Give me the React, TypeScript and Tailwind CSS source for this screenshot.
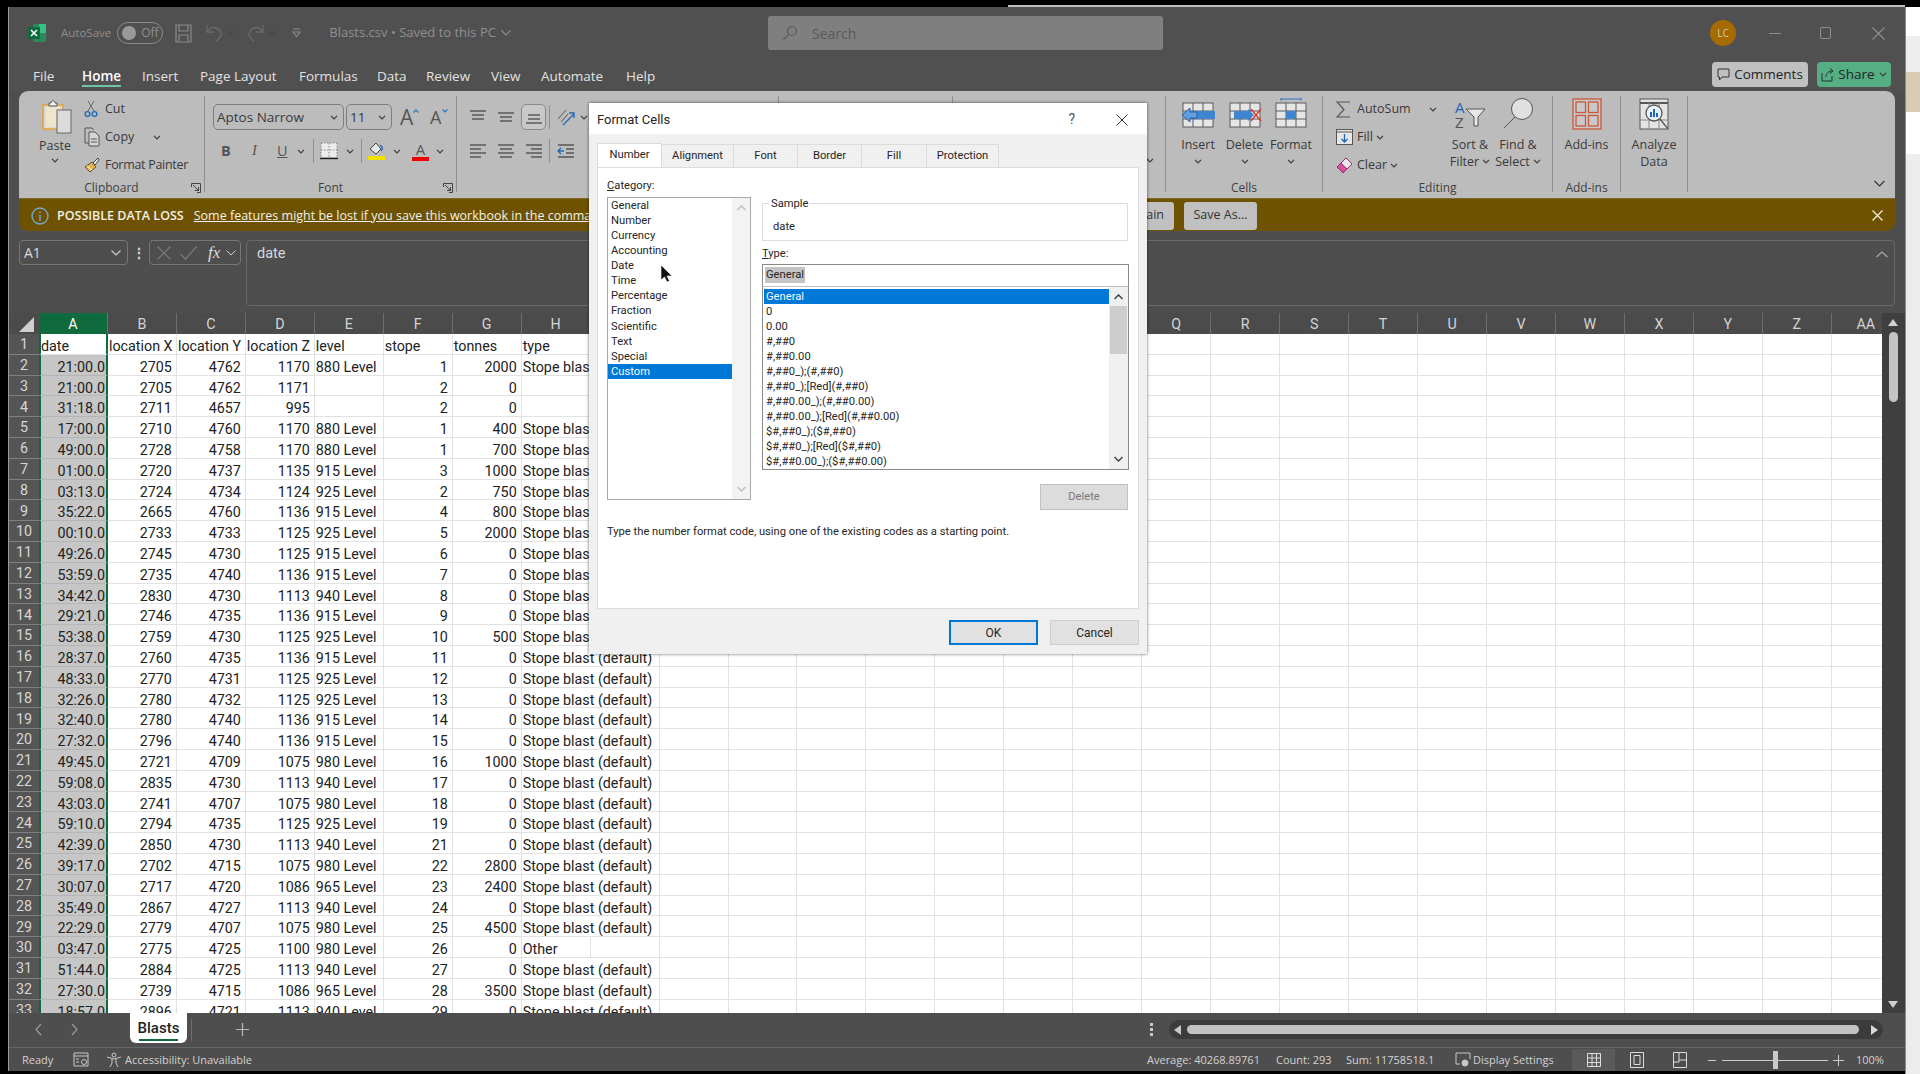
import { ReactNode } from "react";

const rows: string[][] = [
  ["21:00.0", "2705", "4762", "1170", "880 Level", "1", "2000", "Stope blast (default)"],
  ["21:00.0", "2705", "4762", "1171", "", "2", "0", ""],
  ["31:18.0", "2711", "4657", "995", "", "2", "0", ""],
  ["17:00.0", "2710", "4760", "1170", "880 Level", "1", "400", "Stope blast (default)"],
  ["49:00.0", "2728", "4758", "1170", "880 Level", "1", "700", "Stope blast (default)"],
  ["01:00.0", "2720", "4737", "1135", "915 Level", "3", "1000", "Stope blast (default)"],
  ["03:13.0", "2724", "4734", "1124", "925 Level", "2", "750", "Stope blast (default)"],
  ["35:22.0", "2665", "4760", "1136", "915 Level", "4", "800", "Stope blast (default)"],
  ["00:10.0", "2733", "4733", "1125", "925 Level", "5", "2000", "Stope blast (default)"],
  ["49:26.0", "2745", "4730", "1125", "915 Level", "6", "0", "Stope blast (default)"],
  ["53:59.0", "2735", "4740", "1136", "915 Level", "7", "0", "Stope blast (default)"],
  ["34:42.0", "2830", "4730", "1113", "940 Level", "8", "0", "Stope blast (default)"],
  ["29:21.0", "2746", "4735", "1136", "915 Level", "9", "0", "Stope blast (default)"],
  ["53:38.0", "2759", "4730", "1125", "925 Level", "10", "500", "Stope blast (default)"],
  ["28:37.0", "2760", "4735", "1136", "915 Level", "11", "0", "Stope blast (default)"],
  ["48:33.0", "2770", "4731", "1125", "925 Level", "12", "0", "Stope blast (default)"],
  ["32:26.0", "2780", "4732", "1125", "925 Level", "13", "0", "Stope blast (default)"],
  ["32:40.0", "2780", "4740", "1136", "915 Level", "14", "0", "Stope blast (default)"],
  ["27:32.0", "2796", "4740", "1136", "915 Level", "15", "0", "Stope blast (default)"],
  ["49:45.0", "2721", "4709", "1075", "980 Level", "16", "1000", "Stope blast (default)"],
  ["59:08.0", "2835", "4730", "1113", "940 Level", "17", "0", "Stope blast (default)"],
  ["43:03.0", "2741", "4707", "1075", "980 Level", "18", "0", "Stope blast (default)"],
  ["59:10.0", "2794", "4735", "1125", "925 Level", "19", "0", "Stope blast (default)"],
  ["42:39.0", "2850", "4730", "1113", "940 Level", "21", "0", "Stope blast (default)"],
  ["39:17.0", "2702", "4715", "1075", "980 Level", "22", "2800", "Stope blast (default)"],
  ["30:07.0", "2717", "4720", "1086", "965 Level", "23", "2400", "Stope blast (default)"],
  ["35:49.0", "2867", "4727", "1113", "940 Level", "24", "0", "Stope blast (default)"],
  ["22:29.0", "2779", "4707", "1075", "980 Level", "25", "4500", "Stope blast (default)"],
  ["03:47.0", "2775", "4725", "1100", "980 Level", "26", "0", "Other"],
  ["51:44.0", "2884", "4725", "1113", "940 Level", "27", "0", "Stope blast (default)"],
  ["27:30.0", "2739", "4715", "1086", "965 Level", "28", "3500", "Stope blast (default)"],
  ["18:57.0", "2896", "4721", "1113", "940 Level", "29", "0", "Stope blast (default)"],
];
const headerRow = ["date", "location X", "location Y", "location Z", "level", "stope", "tonnes", "type"];
const columns = ["A", "B", "C", "D", "E", "F", "G", "H", "I", "J", "K", "L", "M", "N", "O", "P", "Q", "R", "S", "T", "U", "V", "W", "X", "Y", "Z", "AA"];
const emptyCols = columns.slice(8);
const categories = ["General", "Number", "Currency", "Accounting", "Date", "Time", "Percentage", "Fraction", "Scientific", "Text", "Special", "Custom"];
const formats = ["General", "0", "0.00", "#,##0", "#,##0.00", "#,##0_);(#,##0)", "#,##0_);[Red](#,##0)", "#,##0.00_);(#,##0.00)", "#,##0.00_);[Red](#,##0.00)", "$#,##0_);($#,##0)", "$#,##0_);[Red]($#,##0)", "$#,##0.00_);($#,##0.00)"];
const tabs = [
  { name: "Alignment", w: "w-[72px]" },
  { name: "Font", w: "w-[64px]" },
  { name: "Border", w: "w-[64px]" },
  { name: "Fill", w: "w-[65px]" },
  { name: "Protection", w: "w-[72px]" },
];
const menu = [
  { name: "File", w: "w-[49px]" },
  { name: "Home", w: "w-[60px]" },
  { name: "Insert", w: "w-[58px]" },
  { name: "Page Layout", w: "w-[99px]" },
  { name: "Formulas", w: "w-[78px]" },
  { name: "Data", w: "w-[49px]" },
  { name: "Review", w: "w-[65px]" },
  { name: "View", w: "w-[50px]" },
  { name: "Automate", w: "w-[85px]" },
  { name: "Help", w: "w-[40px]" },
];

function Chev({ className = "" }: { className?: string }) {
  return (
    <svg width="8" height="5" viewBox="0 0 8 5" className={`shrink-0 ${className}`} fill="none" stroke="#3a3a3a" strokeWidth="1.2">
      <path d="M1 .8 4 3.8 7 .8" />
    </svg>
  );
}

function Launcher() {
  return (
    <svg width="10" height="10" viewBox="0 0 10 10" fill="none" stroke="#444" strokeWidth="1">
      <path d="M.5 4V.5H9.5V9.5H6" />
      <path d="M2 2 7.5 7.5M7.5 4V7.5H4" />
    </svg>
  );
}

function Lines({ bars }: { bars: [number, number, number][] }) {
  return (
    <svg width="18" height="16" viewBox="0 0 18 16" stroke="#4a4a4a" strokeWidth="1.3">
      {bars.map(([x1, x2, y], i) => (
        <line key={i} x1={x1} x2={x2} y1={y} y2={y} />
      ))}
    </svg>
  );
}

function Group({ w, label, launcher, children }: { w: string; label?: string; launcher?: boolean; children?: ReactNode }) {
  return (
    <div className={`${w} h-[96px] shrink-0 flex flex-col border-r border-[#8f8f8f]`}>
      <div className="h-[84px] shrink-0 flex">{children}</div>
      <div className="relative h-[16px] shrink-0 leading-[16px] text-[12px] text-center text-[#3f3f3f] whitespace-nowrap">
        {label}
        {launcher && (
          <span className="absolute right-[3px] top-[3px]">
            <Launcher />
          </span>
        )}
      </div>
    </div>
  );
}

function SmallRow({ icon, label, chevron, tight }: { icon: ReactNode; label: string; chevron?: ReactNode; tight?: boolean }) {
  return (
    <div className={`h-[28px] flex items-center whitespace-nowrap text-[12.5px] text-[#3a3a3a] ${tight ? "tracking-[-0.3px]" : ""}`}>
      <span className="w-[21px] flex justify-start">{icon}</span>
      {label}
      {chevron}
    </div>
  );
}

function BigButton({ icon, lines, w }: { icon: ReactNode; lines: ReactNode[]; w: string }) {
  return (
    <div className={`${w} shrink-0 flex flex-col items-center text-[12.5px] leading-[17px] text-[#3a3a3a] whitespace-nowrap`}>
      <div className="h-[31px] mt-[3px] flex items-end justify-center">{icon}</div>
      <div className="mt-[6px] flex flex-col items-center">
        {lines.map((l, i) => (
          <div key={i} className="h-[17px] flex items-center gap-[3px]">{l}</div>
        ))}
      </div>
    </div>
  );
}

function CellsIcon({ kind }: { kind: "insert" | "delete" | "format" }) {
  return (
    <svg width="34" height="30" viewBox="0 0 34 30" className="mb-[2px]" fill="none">
      <rect x="2" y="5" width="30" height="24" fill="#e6e6e6" stroke="#5a5a5a" />
      <path d="M12 5V29M22 5V29M2 13H32M2 21H32" stroke="#5a5a5a" />
      {kind === "insert" && (
        <>
          <rect x="4" y="13" width="30" height="8" fill="#3f85d0" />
          <path d="M9 10 1 17 9 24V20H16V14H9Z" fill="#5f9fe0" stroke="#2a62a8" />
        </>
      )}
      {kind === "delete" && (
        <>
          <rect x="6" y="13" width="14" height="8" fill="#3f85d0" />
          <path d="M20 11 26 17 20 23Z" fill="#3f85d0" />
          <path d="M23 11 33 23M33 11 23 23" stroke="#d83b2a" strokeWidth="1.4" />
        </>
      )}
      {kind === "format" && (
        <>
          <rect x="12" y="13" width="10" height="8" fill="#3f85d0" />
          <path d="M7 1H27M7 0V2.5M27 0V2.5" stroke="#2f74c0" strokeWidth="1.2" />
        </>
      )}
    </svg>
  );
}

function Ribbon() {
  return (
    <div className="mx-[10px] h-[107px] shrink-0 bg-[#bcbcbc] rounded-t-[9px] pt-[5px] flex font-['Open_Sans',sans-serif]">
      <Group w="w-[186px]" label="Clipboard" launcher>
        <div className="ml-[17px] w-[38px] flex flex-col items-center text-[12.5px] text-[#3a3a3a]">
          <svg width="30" height="34" viewBox="0 0 30 34" className="mt-[4px] ml-[3px]" fill="none">
            <path d="M1 5H21V29H1Z" fill="#d9d9d9" stroke="#e1a23a" strokeWidth="1.6" />
            <rect x="4" y="7" width="14" height="20" fill="#efe4cc" />
            <path d="M7 6V3H9C9 0 13 0 13 3H15V6Z" fill="#eee" stroke="#555" />
            <rect x="15" y="10" width="14" height="23" fill="#dcdcdc" stroke="#666" />
          </svg>
          <div className="mt-[3px] leading-[18px]">Paste</div>
          <Chev className="mt-[3px]" />
        </div>
        <div className="ml-[10px] -mt-px">
          <SmallRow
            label="Cut"
            icon={
              <svg width="14" height="18" viewBox="0 0 14 18" fill="none">
                <path d="M4 11 10 1M10 11 4 1" stroke="#666" />
                <circle cx="3.5" cy="14" r="2.4" stroke="#1c68b8" strokeWidth="1.3" />
                <circle cx="10.5" cy="14" r="2.4" stroke="#1c68b8" strokeWidth="1.3" />
              </svg>
            }
          />
          <div className="flex items-center">
            <SmallRow
              label="Copy"
              icon={
                <svg width="16" height="20" viewBox="0 0 16 20" fill="none" stroke="#555">
                  <path d="M5 16H1V1H8L10 3" />
                  <path d="M5 5H11L15 9V19H5Z" fill="#d6d6d6" />
                  <path d="M7 12H13M7 15H13" />
                </svg>
              }
            />
            <Chev className="ml-[19px]" />
          </div>
          <SmallRow
            label="Format Painter"
            tight
            icon={
              <svg width="16" height="16" viewBox="0 0 16 16" fill="none">
                <path d="M1 10 8 5 12 10 6 15Z" fill="#e6b545" stroke="#555" />
                <path d="M9 6 14 1 15 3 11 8Z" fill="#eee" stroke="#444" />
                <path d="M3 9 8 13" stroke="#fff" />
              </svg>
            }
          />
        </div>
      </Group>
      <Group w="w-[252px]" label="Font" launcher>
        <div className="ml-[8px] mt-[8px]">
          <div className="flex items-center h-[26px]">
            <div className="w-[131px] h-[26px] flex items-center justify-between px-[3px] pr-[5px] border border-[#7d7d7d] rounded-[5px] text-[13.5px] text-[#3a3a3a]">
              Aptos Narrow
              <Chev />
            </div>
            <div className="ml-[2px] w-[46px] h-[26px] flex items-center justify-between px-[3px] pr-[5px] border border-[#7d7d7d] rounded-[5px] text-[13.5px] text-[#3a3a3a]">
              11
              <Chev />
            </div>
            <div className="ml-[8px] relative w-[16px] text-[21px] leading-[26px] text-[#555]">
              A
              <svg width="6" height="4" viewBox="0 0 6 4" className="absolute -right-[3px] top-[5px]" fill="none" stroke="#2b70b8" strokeWidth="1.2"><path d="M.5 3.5 3 1 5.5 3.5" /></svg>
            </div>
            <div className="ml-[14px] relative w-[14px] text-[18px] leading-[26px] text-[#555]">
              A
              <svg width="6" height="4" viewBox="0 0 6 4" className="absolute -right-[4px] top-[5px]" fill="none" stroke="#2b70b8" strokeWidth="1.2"><path d="M.5.5 3 3 5.5.5" /></svg>
            </div>
          </div>
          <div className="mt-[9px] h-[24px] flex items-center text-[#555]">
            <span className="ml-[8px] w-[12px] text-[14.5px] font-bold">B</span>
            <span className="ml-[19px] w-[7px] text-[14.5px] italic font-['Liberation_Serif',serif]">I</span>
            <span className="ml-[18px] w-[12px] text-[14.5px] underline">U</span>
            <Chev className="ml-[8px]" />
            <span className="ml-[8px] w-px h-[24px] bg-[#8f8f8f]" />
            <svg width="18" height="18" viewBox="0 0 18 18" className="ml-[6px]" fill="none">
              <rect x="1" y="1" width="16" height="14" fill="#ececec" />
              <path d="M1 1H17M1 8H17M1 1V15M17 1V15M9 1V15" stroke="#888" strokeDasharray="1.5 1.5" />
              <path d="M0 16.5H18" stroke="#222" strokeWidth="1.4" />
            </svg>
            <Chev className="ml-[8px]" />
            <span className="ml-[7px] w-px h-[24px] bg-[#8f8f8f]" />
            <span className="ml-[6px] w-[17px] flex flex-col items-center">
              <svg width="16" height="13" viewBox="0 0 16 13" fill="none">
                <path d="M1 7 7 1 12 7 7 12Z" fill="#e8e8e8" stroke="#444" />
                <path d="M12 9C14 7 14 5 11 3" stroke="#1c68b8" strokeWidth="1.4" />
              </svg>
              <span className="w-[17px] h-[4px] mt-[1px] bg-[#f3e000]" />
            </span>
            <Chev className="ml-[8px]" />
            <span className="ml-[11px] w-[17px] flex flex-col items-center leading-[14px] text-[15px]">
              A
              <span className="w-[17px] h-[4px] mt-[1px] bg-[#f20000]" />
            </span>
            <Chev className="ml-[7px]" />
          </div>
        </div>
      </Group>
      <Group w="w-[322px]" label="Alignment">
        <div className="ml-[12px] mt-[8px]">
          <div className="h-[26px] flex items-center">
            <span className="w-[28px]"><Lines bars={[[1, 17, 2], [3, 15, 6], [3, 15, 10]]} /></span>
            <span className="w-[28px]"><Lines bars={[[1, 17, 4], [3, 15, 8], [3, 15, 12]]} /></span>
            <span className="w-[25px] h-[26px] -ml-[4px] flex items-center justify-center border border-[#8a8a8a] rounded-[5px] bg-[#c8c8c8]"><Lines bars={[[3, 15, 6], [3, 15, 10], [1, 17, 14]]} /></span>
            <span className="ml-[3px] w-px h-[24px] bg-[#8f8f8f]" />
            <svg width="20" height="20" viewBox="0 0 20 20" className="ml-[6px]" fill="none">
              <path d="M2 12 10 3M5 15 12 7" stroke="#555" />
              <path d="M7 18 18 7M13 6H18V11" stroke="#1c68b8" strokeWidth="1.3" />
            </svg>
            <Chev className="ml-[4px]" />
          </div>
          <div className="mt-[9px] h-[24px] flex items-center">
            <span className="w-[28px]"><Lines bars={[[1, 17, 2], [1, 12, 6], [1, 17, 10], [1, 12, 14]]} /></span>
            <span className="w-[28px]"><Lines bars={[[1, 17, 2], [3, 15, 6], [1, 17, 10], [3, 15, 14]]} /></span>
            <span className="w-[21px]"><Lines bars={[[1, 17, 2], [6, 17, 6], [1, 17, 10], [6, 17, 14]]} /></span>
            <span className="ml-[3px] w-px h-[24px] bg-[#8f8f8f]" />
            <svg width="18" height="16" viewBox="0 0 18 16" className="ml-[7px]" fill="none">
              <path d="M1 2H17M9 6H17M9 10H17M1 14H17" stroke="#555" strokeWidth="1.3" />
              <path d="M7 8H1M4 5 1 8 4 11" stroke="#1c68b8" strokeWidth="1.3" />
            </svg>
          </div>
        </div>
      </Group>
      <Group w="w-[174px]" />
      <Group w="w-[213px]">
        <div className="flex-1 flex justify-end items-start pr-[11px] pt-[62px]">
          <Chev />
        </div>
      </Group>
      <Group w="w-[157px]" label="Cells">
        <div className="flex">
          <BigButton w="w-[55px] pl-[9px]" icon={<CellsIcon kind="insert" />} lines={["Insert", <Chev key="c" />]} />
          <BigButton w="w-[47px]" icon={<CellsIcon kind="delete" />} lines={["Delete", <Chev key="c" />]} />
          <BigButton w="w-[46px]" icon={<CellsIcon kind="format" />} lines={["Format", <Chev key="c" />]} />
        </div>
      </Group>
      <Group w="w-[230px]" label="Editing">
        <div className="ml-[13px] -mt-px w-[112px]">
          <div className="flex items-center">
            <SmallRow
              label="AutoSum"
              icon={
                <svg width="15" height="17" viewBox="0 0 15 17" fill="none" stroke="#555" strokeWidth="1.2">
                  <path d="M14 1H1L8 8.5 1 16H14" />
                </svg>
              }
            />
            <Chev className="ml-[18px]" />
          </div>
          <SmallRow
            label="Fill"
            chevron={<Chev className="ml-[3px]" />}
            icon={
              <svg width="17" height="16" viewBox="0 0 17 16" fill="none">
                <rect x=".5" y=".5" width="16" height="15" fill="#e6e6e6" stroke="#555" />
                <path d="M.5 3H16.5" stroke="#555" />
                <path d="M8.5 5V13M5.5 10 8.5 13 11.5 10" stroke="#1c68b8" strokeWidth="1.3" />
              </svg>
            }
          />
          <SmallRow
            label="Clear"
            chevron={<Chev className="ml-[3px]" />}
            icon={
              <svg width="17" height="17" viewBox="0 0 17 17" fill="none">
                <path d="M1 10 10 1 16 7 7 16Z" fill="#e8e8e8" stroke="#a22a74" />
                <path d="M1 10 5 6 11 12 7 16Z" fill="#d84f9a" stroke="#a22a74" />
              </svg>
            }
          />
        </div>
        <BigButton
          w="w-[46px] -ml-[2px] pl-[2px]"
          icon={
            <svg width="32" height="30" viewBox="0 0 32 30" fill="none">
              <text x="1" y="13" fontSize="15" fill="#1c68b8">A</text>
              <text x="1" y="28" fontSize="15" fill="#555">Z</text>
              <path d="M12 9H31L24 17V26H20V17Z" fill="#e8e8e8" stroke="#555" />
            </svg>
          }
          lines={["Sort &", <>Filter <Chev key="c" /></>]}
        />
        <BigButton
          w="w-[46px] ml-[3px]"
          icon={
            <svg width="32" height="33" viewBox="0 0 32 33" fill="none">
              <circle cx="20" cy="12" r="10.5" fill="#e0e0e0" stroke="#555" />
              <path d="M13 20 2 31" stroke="#555" />
            </svg>
          }
          lines={["Find &", <>Select <Chev key="c" /></>]}
        />
      </Group>
      <Group w="w-[68px]" label="Add-ins">
        <BigButton
          w="w-full"
          icon={
            <svg width="30" height="32" viewBox="0 0 30 32" fill="none" stroke="#c9573a" strokeWidth="1.3">
              <rect x="1" y="1" width="28" height="30" fill="#c9c9c9" />
              <rect x="4" y="4" width="9.5" height="10.5" />
              <rect x="16.5" y="4" width="9.5" height="10.5" />
              <rect x="4" y="17.5" width="9.5" height="10.5" />
              <rect x="16.5" y="17.5" width="9.5" height="10.5" />
            </svg>
          }
          lines={["Add-ins"]}
        />
      </Group>
      <Group w="w-[67px]" label="">
        <BigButton
          w="w-full"
          icon={
            <svg width="31" height="32" viewBox="0 0 31 32" fill="none" stroke="#555">
              <rect x="1" y="1" width="28" height="30" fill="#e4e4e4" />
              <path d="M1 5H29" strokeWidth="2" />
              <path d="M1 22H29M10 5V31M20 5V31" stroke="#888" />
              <circle cx="15" cy="15" r="8" fill="#e9f1f7" strokeWidth="1.3" />
              <path d="M21 21 29 31" strokeWidth="1.3" />
              <path d="M12 19V14M15 19V11M18 19V15" stroke="#1c68b8" strokeWidth="2" />
            </svg>
          }
          lines={["Analyze", "Data"]}
        />
      </Group>
      <div className="flex-1 flex justify-end items-start pr-[10px] pt-[84px]">
        <svg width="11" height="7" viewBox="0 0 11 7" fill="none" stroke="#333" strokeWidth="1.2"><path d="M.5 1 5.5 6 10.5 1" /></svg>
      </div>
    </div>
  );
}

function Dialog() {
  return (
    <div className="absolute left-[589px] top-[103px] w-[558px] h-[551px] bg-[#f0f0f0] flex flex-col font-['Roboto',sans-serif] text-[#262626] text-[11.2px] shadow-[0_0_3px_rgba(0,0,0,0.6)]">
      <div className="h-[31px] shrink-0 bg-white flex items-center pl-[8px] pt-[2px] text-[13px]">
        Format Cells
        <span className="ml-auto text-[14px] text-[#555]">?</span>
        <svg width="12" height="12" viewBox="0 0 12 12" className="ml-[41px] mr-[19px]" fill="none" stroke="#333"><path d="M.5.5 11.5 11.5M11.5.5 .5 11.5" /></svg>
      </div>
      <div className="ml-[8px] mt-[9px] h-[24px] flex items-end">
        <div className="w-[65px] h-[24px] bg-white flex items-center justify-center border border-b-0 border-[#dcdcdc]">Number</div>
        {tabs.map((t) => (
          <div key={t.name} className={`${t.w} h-[23px] bg-[#f0f0f0] flex items-center justify-center border-t border-r border-[#dcdcdc]`}>{t.name}</div>
        ))}
      </div>
      <div className="mx-[8px] h-[442px] bg-white border border-[#dcdcdc] pl-[9px]">
        <div className="flex">
          <div className="w-[144px]">
            <div className="mt-[10px] h-[16px] leading-[16px]"><span className="underline">C</span>ategory:</div>
            <div className="mt-[3px] h-[303px] border border-[#a8a8a8] flex">
              <div className="w-[124px] flex flex-col">
                {categories.map((c) => (
                  <div key={c} className={`h-[15.07px] leading-[15px] pl-[3px] ${c === "Custom" ? "bg-[#0078d7] text-[#f4f8fc]" : ""}`}>{c}</div>
                ))}
              </div>
              <div className="flex-1 bg-[#f3f3f3] flex flex-col items-center justify-between py-[7px]">
                <svg width="9" height="6" viewBox="0 0 9 6" fill="none" stroke="#c0c0c0" strokeWidth="1.5"><path d="M.5 5 4.5 1 8.5 5" /></svg>
                <svg width="9" height="6" viewBox="0 0 9 6" fill="none" stroke="#c0c0c0" strokeWidth="1.5"><path d="M.5 1 4.5 5 8.5 1" /></svg>
              </div>
            </div>
          </div>
          <div className="ml-[11px] w-[367px]">
            <div className="relative mt-[35px] h-[38px] w-[366px] border border-[#dcdcdc] pl-[10px] pt-[15px] leading-[16px]">
              <span className="absolute left-[6px] -top-[8px] px-[2px] bg-white leading-[16px]">Sample</span>
              date
            </div>
            <div className="mt-[5px] h-[16px] leading-[16px]"><span className="underline">T</span>ype:</div>
            <div className="mt-[2px] h-[23px] border border-[#8a8a8a] border-b-[#c0c0c0] flex items-center pl-[2px] pb-[1px]">
              <span className="bg-[#c4c4c4] px-px leading-[16px]">General</span>
            </div>
            <div className="h-[183px] border border-t-0 border-[#8a8a8a] flex">
              <div className="w-[346px] pl-px pt-[2px] flex flex-col">
                {formats.map((f, i) => (
                  <div key={i} className={`h-[15.07px] leading-[15px] pl-[2px] whitespace-nowrap ${i === 0 ? "bg-[#0078d7] text-[#f4f8fc]" : ""}`}>{f}</div>
                ))}
              </div>
              <div className="flex-1 bg-[#f0f0f0] flex flex-col items-center">
                <svg width="9" height="6" viewBox="0 0 9 6" className="mt-[7px]" fill="none" stroke="#444" strokeWidth="1.5"><path d="M.5 5 4.5 1 8.5 5" /></svg>
                <div className="mt-[6px] w-[17px] h-[48px] bg-[#cdcdcd]" />
                <svg width="9" height="6" viewBox="0 0 9 6" className="mt-auto mb-[7px]" fill="none" stroke="#444" strokeWidth="1.5"><path d="M.5 1 4.5 5 8.5 1" /></svg>
              </div>
            </div>
            <div className="mt-[14px] flex justify-end pr-px">
              <div className="w-[88px] h-[26px] flex items-center justify-center bg-[#dcdcdc] border border-[#c0c0c0] text-[#7a7a7a]">Delete</div>
            </div>
          </div>
        </div>
        <div className="mt-[14px] h-[16px] leading-[16px] whitespace-nowrap">Type the number format code, using one of the existing codes as a starting point.</div>
      </div>
      <div className="mt-[11px] pr-[8px] flex justify-end gap-[12px]">
        <div className="w-[89px] h-[25px] flex items-center justify-center bg-[#e1e1e1] border-2 border-[#0078d7] text-[12px]">OK</div>
        <div className="w-[89px] h-[25px] flex items-center justify-center bg-[#e1e1e1] border border-[#cfcfcf] text-[12px]">Cancel</div>
      </div>
    </div>
  );
}

function Grid() {
  return (
    <div className="mt-[7px] h-[700px] shrink-0 flex font-['Roboto',sans-serif]">
      <div className="w-[1873px] flex flex-col overflow-hidden">
        <div className="h-[21px] shrink-0 flex bg-[#4b4b4b] text-[14.3px] text-[#d4d4d4]">
          <div className="w-[30px] shrink-0 flex items-end justify-end pr-[5px] pb-[2px]">
            <svg width="15" height="15" viewBox="0 0 15 15"><path d="M15 0V15H0Z" fill="#cfcfcf" /></svg>
          </div>
          {columns.map((c, i) => (
            <div key={c} className={`w-[68.96px] shrink-0 flex items-center justify-center pt-[3px] border-r border-[#6e6e6e] ${i === 0 ? "bg-[#0f6a3e] text-white" : ""}`}>{c}</div>
          ))}
        </div>
        <div className="h-[679px] overflow-hidden bg-white text-[14.3px] text-[#222]">
          <div className="h-[20.8px] flex">
            <div className="w-[30px] shrink-0 flex items-center justify-center pt-[2px] bg-[#555] text-[#d6d6d6] border-b border-[#808080]">1</div>
            {headerRow.map((h, i) => (
              <div key={h} className={`w-[68.96px] shrink-0 leading-[25px] whitespace-nowrap border-b border-[#e2e2e2] ${i === 0 ? "border-x-2 border-x-[#0f6a3e]" : "pl-[1px] border-r border-r-[#e2e2e2]"}`}>{h}</div>
            ))}
            {emptyCols.map((c) => (
              <div key={c} className="w-[68.96px] shrink-0 border-r border-b border-[#e2e2e2]" />
            ))}
          </div>
          {rows.map((r, n) => (
            <div key={n} className="h-[20.8px] flex">
              <div className="w-[30px] shrink-0 flex items-center justify-center pt-[2px] bg-[#555] text-[#d6d6d6] border-b border-[#808080]">{n + 2}</div>
              {r.map((v, i) => {
                if (i === 0) {
                  return <div key={i} className="w-[68.96px] shrink-0 pr-[1px] text-right leading-[25px] bg-[#c6c6c6] border-x-2 border-x-[#0f6a3e] border-b border-b-[#b5b5b5]">{v}</div>;
                }
                if (i === 4 || i === 7) {
                  const long = i === 7 && v.length > 10;
                  return <div key={i} className={`w-[68.96px] shrink-0 pl-[1px] leading-[25px] whitespace-nowrap border-b border-[#e2e2e2] ${long ? "" : "border-r"}`}>{v}</div>;
                }
                return <div key={i} className="w-[68.96px] shrink-0 pr-[4px] text-right leading-[25px] border-r border-b border-[#e2e2e2]">{v}</div>;
              })}
              {emptyCols.map((c) => (
                <div key={c} className="w-[68.96px] shrink-0 border-r border-b border-[#e2e2e2]" />
              ))}
            </div>
          ))}
        </div>
      </div>
      <div className="w-[23px] bg-[#3f3f3f] flex flex-col items-center pr-[1px]">
        <svg width="10" height="7" viewBox="0 0 10 7" className="mt-[6px]"><path d="M5 0 10 7H0Z" fill="#d0d0d0" /></svg>
        <div className="mt-[6px] w-[9px] h-[70px] rounded-full bg-[#c4c4c4]" />
        <svg width="10" height="7" viewBox="0 0 10 7" className="mt-auto mb-[5px]"><path d="M5 7 10 0H0Z" fill="#d0d0d0" /></svg>
      </div>
    </div>
  );
}

export default function App() {
  return (
    <div className="relative w-[1920px] h-[1074px] bg-black overflow-hidden flex items-start font-['Open_Sans',sans-serif]">
      <div className="absolute left-[1008px] top-[5px] w-[897px] h-[2px] bg-[#bdbdbd]" />
      <div className="ml-[8px] mt-[7px] w-[1897px] h-[1064px] shrink-0 bg-[#4e4e4e] border-l border-[#9a9a9a] flex flex-col">
        {/* title bar */}
        <div className="h-[48px] shrink-0 bg-[#505050] flex items-center pt-[4px] text-[#8f8f8f]">
          <div className="w-[759px] shrink-0 flex items-center pl-[19px] whitespace-nowrap">
            <svg width="18" height="18" viewBox="0 0 18 18">
              <rect x="5" y="0" width="13" height="18" rx="1" fill="#2a8a55" />
              <rect x="11" y="0" width="7" height="9" fill="#33c481" />
              <rect x="0" y="3" width="12" height="12" rx="1" fill="#0f6a3e" />
              <path d="M3 6 9 12M9 6 3 12" stroke="#fff" strokeWidth="1.5" />
            </svg>
            <span className="ml-[15px] text-[11.5px]">AutoSave</span>
            <div className="ml-[6px] w-[46px] h-[22px] rounded-full border border-[#8a8a8a] flex items-center pl-[4px] text-[12px]">
              <span className="w-[14px] h-[14px] rounded-full bg-[#9a9a9a]" />
              <span className="ml-[5px]">Off</span>
            </div>
            <svg width="17" height="19" viewBox="0 0 17 19" className="ml-[12px]" fill="none" stroke="#8a8a8a" strokeWidth="1.2">
              <path d="M1 1H16V18H1Z" />
              <path d="M4 1V7H13V1M4 18V11H13V18" />
            </svg>
            <svg width="16" height="18" viewBox="0 0 16 18" className="ml-[14px]" fill="none" stroke="#6a6a6a" strokeWidth="1.3">
              <path d="M1 1V8H8M1 8C5 1 14 3 15 10 15 13 13 15 10 17" />
            </svg>
            <Chev className="ml-[4px] opacity-40" />
            <svg width="16" height="18" viewBox="0 0 16 18" className="ml-[14px]" fill="none" stroke="#6a6a6a" strokeWidth="1.3">
              <path d="M15 1V8H8M15 8C11 1 2 3 1 10 1 13 3 15 6 17" />
            </svg>
            <Chev className="ml-[4px] opacity-40" />
            <svg width="9" height="10" viewBox="0 0 9 10" className="ml-[16px]" fill="none" stroke="#8a8a8a" strokeWidth="1.2">
              <path d="M1 1H8M1 4 4.5 8.5 8 4Z" />
            </svg>
            <span className="ml-[28px] text-[13px]">Blasts.csv  •  Saved to this PC</span>
            <svg width="10" height="6" viewBox="0 0 10 6" className="ml-[5px]" fill="none" stroke="#8f8f8f" strokeWidth="1.2"><path d="M.5.5 5 5 9.5.5" /></svg>
          </div>
          <div className="w-[395px] h-[34px] shrink-0 bg-[#7f7f7f] rounded-[3px] flex items-center pl-[14px] text-[14px] text-[#5a5a5a]">
            <svg width="16" height="16" viewBox="0 0 16 16" fill="none" stroke="#5a5a5a" strokeWidth="1.2">
              <circle cx="10" cy="6" r="4.5" />
              <path d="M6.5 9.5 1.5 14.5" />
            </svg>
            <span className="ml-[14px]">Search</span>
          </div>
          <div className="ml-auto w-[26px] h-[26px] rounded-full bg-[#a56a00] flex items-center justify-center text-[10px] text-[#d8c9a6]">LC</div>
          <div className="ml-[31px] w-[16px] flex justify-center"><span className="block w-[12px] h-px bg-[#8f8f8f]" /></div>
          <div className="ml-[34px] w-[16px] flex justify-center"><span className="block w-[11px] h-[12px] border border-[#8f8f8f] rounded-[2px]" /></div>
          <svg width="13" height="13" viewBox="0 0 13 13" className="ml-[39px] mr-[20px]" fill="none" stroke="#8f8f8f" strokeWidth="1.1"><path d="M.5.5 12.5 12.5M12.5.5 .5 12.5" /></svg>
        </div>
        {/* menu */}
        <div className="h-[36px] shrink-0 bg-[#505050] flex items-start text-[13.5px] text-[#e2e2e2]">
          <div className="mt-[11px] ml-[24px] flex whitespace-nowrap leading-[20px]">
            {menu.map((m) =>
              m.name === "Home" ? (
                <span key={m.name} className={`${m.w} font-semibold text-white`}>
                  <span className="relative inline-block">
                    {m.name}
                    <span className="absolute left-0 right-0 -bottom-[1px] h-[2px] bg-[#6fc4a8]" />
                  </span>
                </span>
              ) : (
                <span key={m.name} className={m.w}>{m.name}</span>
              )
            )}
          </div>
          <div className="ml-auto mr-[14px] mt-[7px] flex gap-[9px] text-[13.5px] text-[#232323]">
            <div className="w-[96px] h-[25px] rounded-[4px] bg-[#c0c0c0] flex items-center justify-center gap-[4px]">
              <svg width="13" height="14" viewBox="0 0 13 14" fill="none" stroke="#333"><path d="M1 1H12V9H5L2.5 12V9H1Z" /></svg>
              Comments
            </div>
            <div className="w-[74px] h-[25px] rounded-[4px] bg-[#55ae84] flex items-center justify-center gap-[4px]">
              <svg width="13" height="14" viewBox="0 0 13 14" fill="none" stroke="#233"><path d="M1 5V13H11V8M5 9C5 5 8 3 12 3M9 .5 12 3 9 5.5" /></svg>
              Share
              <Chev />
            </div>
          </div>
        </div>
        <Ribbon />
        {/* warning bar */}
        <div className="mx-[10px] h-[33px] shrink-0 bg-[#6e5200] rounded-b-[9px] border-t border-t-[#7d6a20] flex items-center pt-[1px] pl-[12px] pr-[12px] text-[12.5px] text-[#f2f0e8]">
          <div className="w-[1143px] flex items-center whitespace-nowrap overflow-hidden">
            <svg width="18" height="18" viewBox="0 0 18 18" fill="none" stroke="#79a9d6" strokeWidth="1.3">
              <circle cx="9" cy="9" r="8" />
              <path d="M9 8V14M9 4.5V6" />
            </svg>
            <span className="ml-[8px] mt-[1px] font-semibold text-[12.5px]">POSSIBLE DATA LOSS</span>
            <span className="ml-[10px] mt-[1px] underline">Some features might be lost if you save this workbook in the comma-delimited (.csv) format.</span>
            <div className="ml-auto w-[100px] h-[28px] shrink-0 rounded-[3px] bg-[#c0c0c0] text-[#333] flex items-center justify-end pr-[10px]">Again</div>
          </div>
          <div className="ml-[10px] w-[73px] h-[28px] rounded-[3px] bg-[#c0c0c0] text-[#333] flex items-center justify-center">Save As...</div>
          <svg width="11" height="11" viewBox="0 0 11 11" className="ml-auto" fill="none" stroke="#f5f0df" strokeWidth="1.3"><path d="M.5.5 10.5 10.5M10.5.5 .5 10.5" /></svg>
        </div>
        {/* formula bar */}
        <div className="mx-[10px] mt-[9px] h-[66px] shrink-0 flex items-start text-[#d8d8d8]">
          <div className="w-[109px] h-[25px] border border-[#777] rounded-[4px] flex items-center justify-between pl-[4px] pr-[6px] text-[14px]">
            A1
            <svg width="10" height="6" viewBox="0 0 10 6" fill="none" stroke="#ccc" strokeWidth="1.2"><path d="M.5.5 5 5 9.5.5" /></svg>
          </div>
          <div className="w-[21px] h-[25px] flex items-center justify-center text-[14px] font-bold">⋮</div>
          <div className="w-[92px] h-[25px] border border-[#777] rounded-[4px] flex items-center pl-[7px]">
            <svg width="14" height="14" viewBox="0 0 14 14" fill="none" stroke="#7a7a7a" strokeWidth="1.2"><path d="M.5.5 13.5 13.5M13.5.5 .5 13.5" /></svg>
            <svg width="17" height="14" viewBox="0 0 17 14" className="ml-[9px]" fill="none" stroke="#7a7a7a" strokeWidth="1.2"><path d="M.5 8 5.5 13 16.5.5" /></svg>
            <span className="ml-[11px] text-[17px] italic font-['Liberation_Serif',serif] text-[#ddd]">fx</span>
            <svg width="10" height="6" viewBox="0 0 10 6" className="ml-[6px]" fill="none" stroke="#ccc" strokeWidth="1"><path d="M.5.5 5 5 9.5.5" /></svg>
          </div>
          <div className="ml-[5px] flex-1 h-[66px] border border-[#6a6a6a] rounded-[4px] flex items-start justify-between pl-[10px] pr-[6px] pt-[2px] text-[14.5px] font-['Roboto',sans-serif]">
            date
            <svg width="12" height="7" viewBox="0 0 12 7" className="mt-[8px]" fill="none" stroke="#aaa" strokeWidth="1.2"><path d="M.5 6 6 1 11.5 6" /></svg>
          </div>
        </div>
        <Grid />
        {/* sheet tabs */}
        <div className="h-[34px] shrink-0 flex items-start text-[#c8c8c8]">
          <svg width="7" height="13" viewBox="0 0 7 13" className="ml-[26px] mt-[10px]" fill="none" stroke="#9a9a9a" strokeWidth="1.2"><path d="M6 1 1 6.5 6 12" /></svg>
          <svg width="7" height="13" viewBox="0 0 7 13" className="ml-[29px] mt-[10px]" fill="none" stroke="#9a9a9a" strokeWidth="1.2"><path d="M1 1 6 6.5 1 12" /></svg>
          <div className="ml-[52px] w-[57px] h-[30px] bg-white rounded-b-[6px] flex flex-col items-center text-[15px] font-medium text-[#222] font-['Roboto',sans-serif]">
            <span className="mt-[5px] leading-[20px]">Blasts</span>
            <span className="mt-[1px] w-[39px] h-[2px] bg-[#0f6a3e]" />
          </div>
          <span className="ml-[4px] mt-[6px] w-px h-[22px] bg-[#6e6e6e]" />
          <svg width="13" height="13" viewBox="0 0 13 13" className="ml-[44px] mt-[10px]" fill="none" stroke="#b8b8b8" strokeWidth="1.2"><path d="M6.5 0V13M0 6.5H13" /></svg>
          <div className="ml-[901px] mt-[10px] w-[3px] h-[13px] flex flex-col justify-between">
            <span className="h-[3px] bg-[#c8c8c8]" />
            <span className="h-[3px] bg-[#c8c8c8]" />
            <span className="h-[3px] bg-[#c8c8c8]" />
          </div>
          <div className="ml-[16px] mt-[7px] w-[714px] h-[19px] rounded-full bg-[#3c3c3c] flex items-center px-[5px]">
            <svg width="7" height="10" viewBox="0 0 7 10"><path d="M0 5 7 0V10Z" fill="#c8c8c8" /></svg>
            <span className="ml-[6px] w-[672px] h-[9px] rounded-full bg-[#c2c2c2]" />
            <svg width="7" height="10" viewBox="0 0 7 10" className="ml-auto"><path d="M7 5 0 0V10Z" fill="#d8d8d8" /></svg>
          </div>
        </div>
        {/* status bar */}
        <div className="h-[24px] shrink-0 border-t border-[#666] flex items-center pt-[1px] text-[11px] text-[#d2d2d2] whitespace-nowrap">
          <div className="w-[1138px] shrink-0 flex items-center pl-[13px]">
            <span className="w-[51px]">Ready</span>
            <svg width="16" height="16" viewBox="0 0 16 16" fill="none" stroke="#c8c8c8">
              <path d="M1 1H15V14H1ZM1 4H15M3 7H6M3 10H6" />
              <circle cx="11" cy="10" r="2.5" />
            </svg>
            <svg width="16" height="16" viewBox="0 0 16 16" className="ml-[17px]" fill="none" stroke="#c8c8c8">
              <circle cx="8" cy="3" r="2" />
              <path d="M1 5 8 7 15 5M6 7V11L4 15M10 7V11L12 15" />
            </svg>
            <span className="ml-[3px]">Accessibility: Unavailable</span>
          </div>
          <span className="w-[129px] shrink-0">Average: 40268.89761</span>
          <span className="w-[70px] shrink-0">Count: 293</span>
          <span className="w-[109px] shrink-0">Sum: 11758518.1</span>
          <div className="w-[117px] shrink-0 flex items-center">
            <svg width="16" height="16" viewBox="0 0 16 16" fill="none" stroke="#c8c8c8">
              <path d="M5 12H1V1H15V7" />
              <circle cx="10" cy="11" r="3" fill="#c8c8c8" />
            </svg>
            <span className="ml-[2px]">Display Settings</span>
          </div>
          <div className="w-[43px] h-[22px] shrink-0 bg-[#5a5a5a] flex items-center justify-center">
            <svg width="14" height="14" viewBox="0 0 14 14" fill="none" stroke="#ddd"><path d="M.5.5H13.5V13.5H.5ZM5 .5V13.5M9.5.5V13.5M.5 5H13.5M.5 9.5H13.5" /></svg>
          </div>
          <div className="w-[43px] shrink-0 flex justify-center">
            <svg width="14" height="16" viewBox="0 0 14 16" fill="none" stroke="#ddd"><path d="M.5.5H13.5V15.5H.5ZM4 3.5H10V12.5H4Z" /></svg>
          </div>
          <div className="w-[44px] shrink-0 flex justify-center">
            <svg width="14" height="16" viewBox="0 0 14 16" fill="none" stroke="#ddd"><path d="M.5.5H13.5V15.5H.5ZM.5 10H6V.5M6 8H13" /></svg>
          </div>
          <span className="ml-[6px] w-[8px] h-px bg-[#ccc]" />
          <div className="ml-[6px] w-[106px] flex items-center">
            <span className="w-[51px] h-px bg-[#ccc]" />
            <span className="w-[5px] h-[18px] bg-[#c8c8c8]" />
            <span className="flex-1 h-px bg-[#ccc]" />
          </div>
          <svg width="11" height="11" viewBox="0 0 11 11" className="ml-[5px]" fill="none" stroke="#ccc"><path d="M5.5 0V11M0 5.5H11" /></svg>
          <span className="ml-[12px]">100%</span>
        </div>
      </div>
      {/* edge of the window behind */}
      <div className="mt-[7px] flex-1 h-[1067px] bg-[#ececec] flex flex-col border-l border-[#8a8a8a]">
        <div className="h-[29px] bg-white" />
        <div className="h-[36px] bg-[#eeeeee]" />
        <div className="h-[40px] bg-[#d8cdb0]" />
        <div className="h-[42px] bg-white" />
      </div>
      <Dialog />
      {/* mouse pointer */}
      <svg width="12" height="18" viewBox="0 0 12 18" className="absolute left-[661px] top-[265px]">
        <path d="M0 0V15L3.5 12 6 17 8.5 16 6 11H11Z" fill="#111" stroke="#fff" strokeWidth=".6" />
      </svg>
    </div>
  );
}
